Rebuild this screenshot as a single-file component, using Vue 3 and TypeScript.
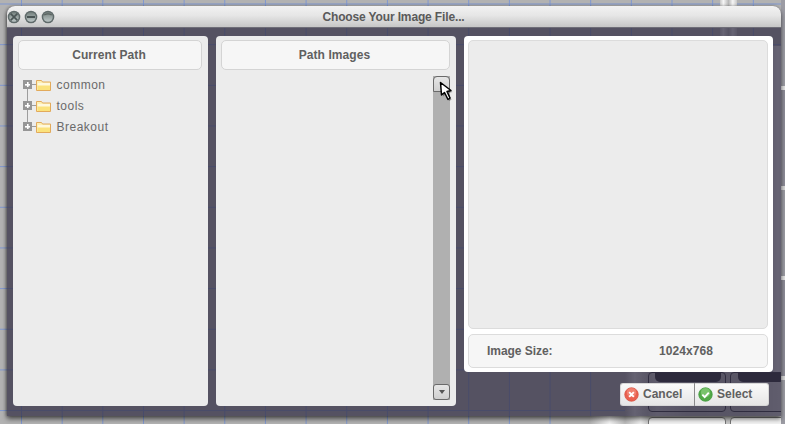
<script setup lang="ts">
const folders: string[] = ['common', 'tools', 'Breakout']
</script>

<template>
  <div class="stage">
    <div class="backdrop" aria-hidden="true">
      <span class="streak s1"></span>
      <span class="streak s2"></span>
      <span class="streak s3"></span>
      <span class="streak s4"></span>
      <span class="bar r1"></span>
      <span class="bar r2"></span>
      <span class="box b1"></span>
      <span class="box b2"></span>
      <span class="box b3"></span>
      <span class="box b4"></span>
      <span class="glow"></span>
    </div>

    <div class="win">
      <header class="titlebar">
        <div class="controls">
          <svg class="ctl" viewBox="0 0 14 14">
            <defs>
              <linearGradient id="ctlfill" x1="0" y1="0" x2="0" y2="1">
                <stop offset="0" stop-color="#76827f" />
                <stop offset="1" stop-color="#bcc6c6" />
              </linearGradient>
            </defs>
            <circle cx="7" cy="7" r="6.3" class="ctl-o"/><circle cx="7" cy="7" r="4.8" fill="url(#ctlfill)"/>
            <path d="M3.6 3.6l6.8 6.8M10.4 3.6l-6.8 6.8" stroke="#4a5555" stroke-width="1.6"/>
          </svg>
          <svg class="ctl" viewBox="0 0 14 14"><circle cx="7" cy="7" r="6.3" class="ctl-o"/><circle cx="7" cy="7" r="4.8" fill="url(#ctlfill)"/><path d="M3 7h8" stroke="#4a5555" stroke-width="2"/></svg>
          <svg class="ctl" viewBox="0 0 14 14"><circle cx="7" cy="7" r="6.3" class="ctl-o"/><circle cx="7" cy="7" r="4.8" fill="url(#ctlfill)"/><path d="M3.2 5c2-1.2 5.6-1.2 7.6 0" stroke="#59625f" stroke-width="1.4" fill="none"/></svg>
        </div>
        <span class="title">Choose Your Image File...</span>
      </header>

      <div class="body">
        <section class="panel left">
          <div class="head">Current Path</div>
          <ul class="tree">
            <li v-for="f in folders" :key="f" class="row">
              <span class="plus"></span>
              <span class="dash"></span>
              <svg class="folder" viewBox="0 0 15 12">
                <path d="M.5 11.5V1.5h5l1 1.5h8v8.5z" fill="#fdf0b4" stroke="#e2aa5c"/>
                <path d="M1.5 4h12.5v7H1.5z" fill="#fbe27c"/>
                <path d="M1.5 4h12.5v2.5H1.5z" fill="#fff8dc"/>
              </svg>
              <span class="name">{{ f }}</span>
            </li>
          </ul>
        </section>

        <section class="panel mid">
          <div class="head">Path Images</div>
          <div class="list">
            <div class="scroll">
              <div class="sbtn top"></div>
              <div class="sbtn bottom"><span class="arrow"></span></div>
            </div>
            <svg class="cursor" viewBox="0 0 16 22">
              <path d="M1.5 1.5l1 12.5 3-2.5 3.5 7 2-1.5-3-6.5 4-1z" fill="#000" fill-opacity=".35" transform="translate(1.5 1.5)"/>
              <path d="M1.5 1.5l1 12.5 3-2.5 3.5 7 2-1.5-3-6.5 4-1z" fill="#fff" stroke="#000" stroke-width="1.5" stroke-linejoin="round"/>
            </svg>
          </div>
        </section>

        <div class="side">
          <section class="panel preview">
            <div class="image"></div>
            <div class="info">
              <span class="label">Image Size:</span>
              <span class="value">1024x768</span>
            </div>
          </section>
          <div class="actions">
            <button class="btn cancel" type="button">
              <svg class="bi" viewBox="0 0 16 16">
                <circle cx="8" cy="8" r="7.2" fill="#e9604f" stroke="#d8503f" stroke-width=".8"/>
                <circle cx="8" cy="6" r="5" fill="#f59a8c" opacity=".55"/>
                <path d="M5.5 5.5l5 5M10.5 5.5l-5 5" stroke="#fff" stroke-width="2"/>
              </svg>
              <span class="btn-label">Cancel</span>
            </button>
            <button class="btn select" type="button">
              <svg class="bi" viewBox="0 0 16 16">
                <circle cx="8" cy="8" r="7.2" fill="#52a847" stroke="#3e9a3a" stroke-width=".8"/>
                <circle cx="8" cy="6" r="5" fill="#9ad88a" opacity=".55"/>
                <path d="M4.6 8.2l2.5 2.5 4.4-4.8" stroke="#fff" stroke-width="2" fill="none"/>
              </svg>
              <span class="btn-label">Select</span>
            </button>
          </div>
        </div>
      </div>
    </div>
  </div>
</template>

<style>
html, body { margin: 0; padding: 0; background: #aaa; }
</style>

<style scoped>
.stage {
  position: relative;
  width: 785px;
  height: 424px;
  overflow: hidden;
  padding: 6px 0 0 7px;
  box-sizing: border-box;
  font-family: "Liberation Sans", Arial, sans-serif;
  background-color: #b2b2b2;
  background-image:
    linear-gradient(to right, #7f97d0 1px, transparent 1px),
    linear-gradient(to bottom, #7f97d0 1px, transparent 1px);
  background-size: 40.67px 40.67px;
  background-position: 21px 3.5px;
}
.backdrop { position: absolute; inset: 0; }
.streak { position: absolute; }
.s1 { left: 720px; top: 0; width: 17px; height: 36px; background: linear-gradient(to right, #c8c8c8, #f6f6f6 20%, #b8b8b8 50%, #f6f6f6 75%, #c8c8c8); }
.s2 { left: 625px; top: 372px; width: 160px; height: 44px; background: linear-gradient(to right, #b2b2b2, #f0f0f0 6%, #c0c0c0 14%, #d8d8d8 20%, #b8b8b8 40%, #c4c4c4 80%, #e0e0e0); }
.s3 { left: 773px; top: 46px; width: 12px; height: 330px; background: linear-gradient(to right, #e2e2e2, #f4f4f4 40%, #d8d8d8); }
.s4 { left: 590px; top: 416px; width: 195px; height: 8px; background: linear-gradient(to right, #b2b2b2, #f4f4f4 10%, #bbb 18%, #efefef 26%, #c8c8c8 30%); }
.bar { position: absolute; top: 372px; height: 10px; background: #1a1a22; border-radius: 0 0 5px 5px; }
.r1 { left: 655px; width: 66px; }
.r2 { left: 738px; width: 47px; }
.box { position: absolute; border: 1px solid #22222c; border-radius: 4px; box-sizing: border-box; }
.b1 { left: 648px; top: 372px; width: 78px; height: 40px; }
.b2 { left: 730px; top: 372px; width: 70px; height: 40px; }
.b3 { left: 648px; top: 417px; width: 78px; height: 20px; background: #f2f2f2; border-color: #777; }
.b4 { left: 730px; top: 417px; width: 70px; height: 20px; background: #f2f2f2; border-color: #777; }
.glow { position: absolute; left: 781px; top: 0; width: 4px; height: 424px; background: repeating-linear-gradient(to bottom, #9c9ca4 0 86px, #e4e4e4 86px 90px, #8e8d98 90px 186px, #d8d8d8 186px 190px); }

.win {
  position: relative;
  width: 774px;
  height: 410px;
  border-radius: 8px 8px 0 0;
  display: flex;
  flex-direction: column;
  box-shadow: 0 3px 5px rgba(0, 0, 0, .55), -1px 0 3px rgba(0, 0, 0, .3);
  background: rgba(52, 48, 70, .74);
}
.titlebar {
  position: relative;
  height: 22px;
  flex: none;
  display: flex;
  align-items: center;
  justify-content: center;
  border-radius: 8px 8px 0 0;
  background: linear-gradient(to bottom, #f2f2f2, #e6e6e6 45%, #c6c6c6);
  border-bottom: 1px solid #6f6e78;
  box-sizing: border-box;
}
.controls {
  position: absolute;
  left: 0;
  top: 4px;
  display: flex;
  gap: 3px;
}
.ctl { width: 14px; height: 14px; display: block; }
.ctl-o { fill: #5f6a6a; }
.title { font-size: 12px; font-weight: 700; color: #5a5a5a; letter-spacing: -.14px; margin-right: 1px; }

.body {
  flex: 1;
  display: flex;
  gap: 8px;
  padding: 8px 8px 10px 6px;
  min-height: 0;
}
.panel {
  background: #ececec;
  border-radius: 4px;
  box-sizing: border-box;
}
.left, .mid { display: flex; flex-direction: column; padding: 4px 6px 6px 5px; }
.left { width: 195px; }
.mid { width: 240px; }
.head {
  height: 30px;
  flex: none;
  box-sizing: border-box;
  border: 1px solid #d4d4d4;
  border-radius: 5px;
  background: #f6f6f6;
  padding-right: 2px;
  display: flex;
  align-items: center;
  justify-content: center;
  font-size: 12px;
  font-weight: 700;
  letter-spacing: .08px;
  color: #606060;
}
.tree {
  position: relative;
  list-style: none;
  margin: 4px 0 0 5px;
  padding: 0;
  font-size: 12px;
  letter-spacing: .5px;
  color: #6a6a6a;
}
.tree::before {
  content: "";
  position: absolute;
  left: 4px;
  top: 14px;
  height: 42px;
  width: 1px;
  background: #9d9d9d;
}
.row { position: relative; display: flex; align-items: center; height: 21px; }
.plus {
  position: relative;
  width: 9px;
  height: 9px;
  background: linear-gradient(#fff, #fff) center / 5px 1.6px no-repeat, linear-gradient(#fff, #fff) center / 1.6px 5px no-repeat, #969696;
}
.dash { width: 4px; height: 1px; background: #9d9d9d; }
.folder { width: 15px; height: 12px; display: block; margin-right: 5.5px; }
.name { line-height: 1; }

.list { position: relative; flex: 1; display: flex; justify-content: flex-end; padding: 6px 0 0; min-height: 0; }
.scroll {
  width: 17px;
  background: #b0b0b0;
  display: flex;
  flex-direction: column;
  justify-content: space-between;
}
.sbtn {
  height: 16px;
  box-sizing: border-box;
  background: linear-gradient(to bottom, #e6e6e6, #cfcfcf);
  border: 1px solid #6a6a6a;
  border-radius: 3px;
  display: flex;
  align-items: center;
  justify-content: center;
}
.sbtn.top { border-radius: 4px 4px 0 0; }
.arrow { width: 0; height: 0; border: 3px solid transparent; border-top: 4px solid #555; border-bottom: 0; }
.cursor { position: absolute; left: 218px; top: 11px; width: 16px; height: 22px; }

.side { width: 309px; display: flex; flex-direction: column; }
.preview {
  background: #fff;
  height: 336px;
  padding: 4px 5px 4px 4px;
  display: flex;
  flex-direction: column;
  gap: 5px;
  flex: none;
}
.image {
  flex: 1;
  background: #ececec;
  border: 1px solid #dcdcdc;
  border-radius: 5px;
}
.info {
  height: 34px;
  flex: none;
  box-sizing: border-box;
  background: #f6f6f6;
  border: 1px solid #dcdcdc;
  border-radius: 5px;
  display: flex;
  align-items: center;
  font-size: 12px;
  font-weight: 700;
  color: #606060;
}
.label { margin-left: 18px; width: 172px; letter-spacing: -.05px; }
.value { letter-spacing: .08px; }
.actions { display: flex; justify-content: flex-end; margin: 11px 4px 0 0; }
.btn {
  height: 23px;
  box-sizing: border-box;
  padding: 0 0 0 4px;
  display: flex;
  align-items: center;
  gap: 4px;
  border: 1px solid #d8d8d8;
  background: linear-gradient(to bottom, #fafafa, #e6e6e6);
  font: 700 12px "Liberation Sans", Arial, sans-serif;
  color: #606060;
}
.btn-label { margin-top: -2px; }
.cancel { width: 75px; border-radius: 3px 0 0 3px; border-right-color: #8a8a8a; }
.select { width: 74px; border-radius: 0 3px 3px 0; border-left: 0; }
.bi { width: 15px; height: 15px; display: block; margin-left: -1px; }
</style>
